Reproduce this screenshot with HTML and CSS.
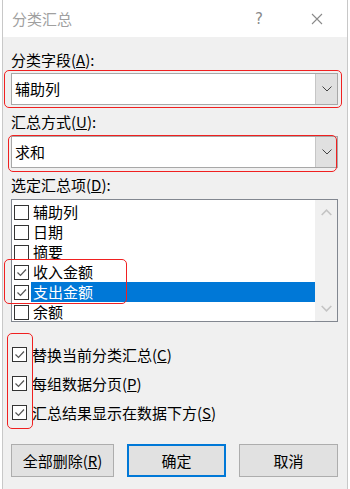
FILE: index.html
```html
<!DOCTYPE html>
<html lang="zh-CN">
<head>
<meta charset="utf-8">
<title>分类汇总</title>
<link rel="stylesheet" href="styles.css">
</head>
<body>
<div class="dialog">
  <div class="titlebar">
    <span class="title">分类汇总</span>
    <span class="help">?</span>
    <svg class="close" width="12" height="12" viewBox="0 0 12 12"><path d="M1 1 L11 11 M11 1 L1 11" stroke="#8a8a8a" stroke-width="1.1" fill="none"/></svg>
  </div>
  <div class="content">
    <div class="label l1">分类字段(<u>A</u>):</div>
    <div class="combo">
      <span class="combo-text">辅助列</span>
      <span class="combo-btn"><svg width="10" height="6" viewBox="0 0 10 6"><path d="M0.5 0.5 L5 5 L9.5 0.5" stroke="#444" stroke-width="1" fill="none"/></svg></span>
    </div>
    <div class="label l2">汇总方式(<u>U</u>):</div>
    <div class="combo">
      <span class="combo-text">求和</span>
      <span class="combo-btn"><svg width="10" height="6" viewBox="0 0 10 6"><path d="M0.5 0.5 L5 5 L9.5 0.5" stroke="#444" stroke-width="1" fill="none"/></svg></span>
    </div>
    <div class="label l3">选定汇总项(<u>D</u>):</div>
    <div class="listbox">
      <div class="items">
        <div class="item"><span class="cb"></span><span class="itext">辅助列</span></div>
        <div class="item"><span class="cb"></span><span class="itext">日期</span></div>
        <div class="item"><span class="cb"></span><span class="itext">摘要</span></div>
        <div class="item"><span class="cb"><svg width="13" height="13" viewBox="0 0 13 13"><path d="M2.5 6.5 L5.5 9.5 L11 3.5" stroke="#555" stroke-width="1.2" fill="none"/></svg></span><span class="itext">收入金额</span></div>
        <div class="item selected"><span class="cb"><svg width="13" height="13" viewBox="0 0 13 13"><path d="M2.5 6.5 L5.5 9.5 L11 3.5" stroke="#555" stroke-width="1.2" fill="none"/></svg></span><span class="itext">支出金额</span></div>
        <div class="item"><span class="cb"></span><span class="itext">余额</span></div>
      </div>
      <div class="scrollbar">
        <svg width="11" height="7" viewBox="0 0 11 7"><path d="M0.7 6 L5.5 1.2 L10.3 6" stroke="#c4c4c4" stroke-width="1.6" fill="none"/></svg>
        <svg width="11" height="7" viewBox="0 0 11 7"><path d="M0.7 1 L5.5 5.8 L10.3 1" stroke="#c4c4c4" stroke-width="1.6" fill="none"/></svg>
      </div>
    </div>
    <div class="options">
      <div class="opt"><span class="cb"><svg width="13" height="13" viewBox="0 0 13 13"><path d="M2.5 6.5 L5.5 9.5 L11 3.5" stroke="#555" stroke-width="1.2" fill="none"/></svg></span><span>替换当前分类汇总(<u>C</u>)</span></div>
      <div class="opt"><span class="cb"><svg width="13" height="13" viewBox="0 0 13 13"><path d="M2.5 6.5 L5.5 9.5 L11 3.5" stroke="#555" stroke-width="1.2" fill="none"/></svg></span><span>每组数据分页(<u>P</u>)</span></div>
      <div class="opt"><span class="cb"><svg width="13" height="13" viewBox="0 0 13 13"><path d="M2.5 6.5 L5.5 9.5 L11 3.5" stroke="#555" stroke-width="1.2" fill="none"/></svg></span><span>汇总结果显示在数据下方(<u>S</u>)</span></div>
    </div>
    <div class="buttons">
      <button class="btn b-remove">全部删除(<u>R</u>)</button>
      <button class="btn b-ok">确定</button>
      <button class="btn b-cancel">取消</button>
    </div>
  </div>
  <div class="mark m1"></div>
  <div class="mark m2"></div>
  <div class="mark m3"></div>
  <div class="mark m4"></div>
</div>
</body>
</html>
```
FILE: styles.css
```css
html, body {
  margin: 0;
  padding: 0;
  background: #ffffff;
  width: 350px;
  height: 489px;
  overflow: hidden;
}
body {
  font-family: "Noto Sans CJK SC", "Noto Sans", sans-serif;
  font-size: 15px;
  color: #000;
}
.dialog {
  position: relative;
  margin-left: 3px;
  width: 344px;
  height: 489px;
  background: #f0f0f0;
  box-shadow: -1px 0 0 #c8c8c8, 1px 0 0 #c8c8c8;
}
.titlebar {
  height: 37px;
  background: #ffffff;
  display: flex;
  align-items: center;
  padding-left: 9px;
}
.title {
  color: #a0a0a0;
  font-size: 15px;
  line-height: 20px;
  flex: 1;
}
.help {
  color: #8a8a8a;
  font-family: "DejaVu Sans", sans-serif;
  font-size: 15px;
  line-height: 20px;
  margin-right: 48px;
}
.close {
  margin-right: 24px;
}
.content {
  padding: 0 9px 0 8px;
}
.label {
  line-height: 20px;
  height: 20px;
}
.l1 { margin-top: 13px; }
.l2 { margin-top: 7px; }
.l3 { margin-top: 7px; }
.combo {
  margin-top: 3px;
  height: 32px;
  box-sizing: border-box;
  border: 1px solid #a8a8a8;
  background: #ffffff;
  display: flex;
}
.l2 + .combo { margin-top: 4px; height: 32px; }
.combo-text {
  flex: 1;
  padding-left: 3px;
  line-height: 30px;
}
.combo-btn {
  width: 21px;
  background: #e0e0e0;
  border-left: 1px solid #c6c6c6;
  display: flex;
  align-items: center;
  justify-content: center;
}
.listbox {
  margin-top: 4px;
  height: 123px;
  box-sizing: border-box;
  border: 1px solid #828790;
  background: #ffffff;
  display: flex;
}
.items {
  flex: 1;
  padding-top: 2px;
}
.item {
  height: 20px;
  display: flex;
  align-items: center;
  padding-left: 2px;
}
.cb {
  width: 15px;
  height: 15px;
  box-sizing: border-box;
  border: 1px solid #333333;
  background: #ffffff;
  display: flex;
  align-items: center;
  justify-content: center;
  flex: none;
}
.itext {
  margin-left: 2px;
  padding-left: 2px;
  line-height: 20px;
  flex: 1;
}
.item.selected .itext {
  background: #0078d7;
  color: #ffffff;
}
.scrollbar {
  width: 22px;
  background: #f0f0f0;
  display: flex;
  flex-direction: column;
  justify-content: space-between;
  align-items: center;
  padding: 9px 0 9px;
}
.options {
  margin-top: 18px;
}
.opt {
  height: 29px;
  display: flex;
  align-items: center;
  padding-left: 1px;
}
.opt .cb {
  margin-right: 5px;
}
.buttons {
  margin-top: 17px;
  display: flex;
  justify-content: space-between;
}
.btn {
  height: 33px;
  box-sizing: border-box;
  background: #e1e1e1;
  border: 1px solid #adadad;
  font-family: "Noto Sans CJK SC", "Noto Sans", sans-serif;
  font-size: 15px;
  color: #000;
  padding: 0;
  line-height: 29px;
}
.b-remove { width: 103px; }
.b-ok { width: 99px; border: 2px solid #0078d7; }
.b-cancel { width: 99px; }
.mark {
  position: absolute;
  box-sizing: border-box;
  border: 1px solid #f02020;
  border-radius: 5px;
}
.m1 { left: 1px; top: 70px; width: 338px; height: 38px; }
.m2 { left: 5px; top: 135px; width: 329px; height: 37px; }
.m3 { left: 1px; top: 259px; width: 123px; height: 45px; }
.m4 { left: 4px; top: 333px; width: 26px; height: 96px; }
```
